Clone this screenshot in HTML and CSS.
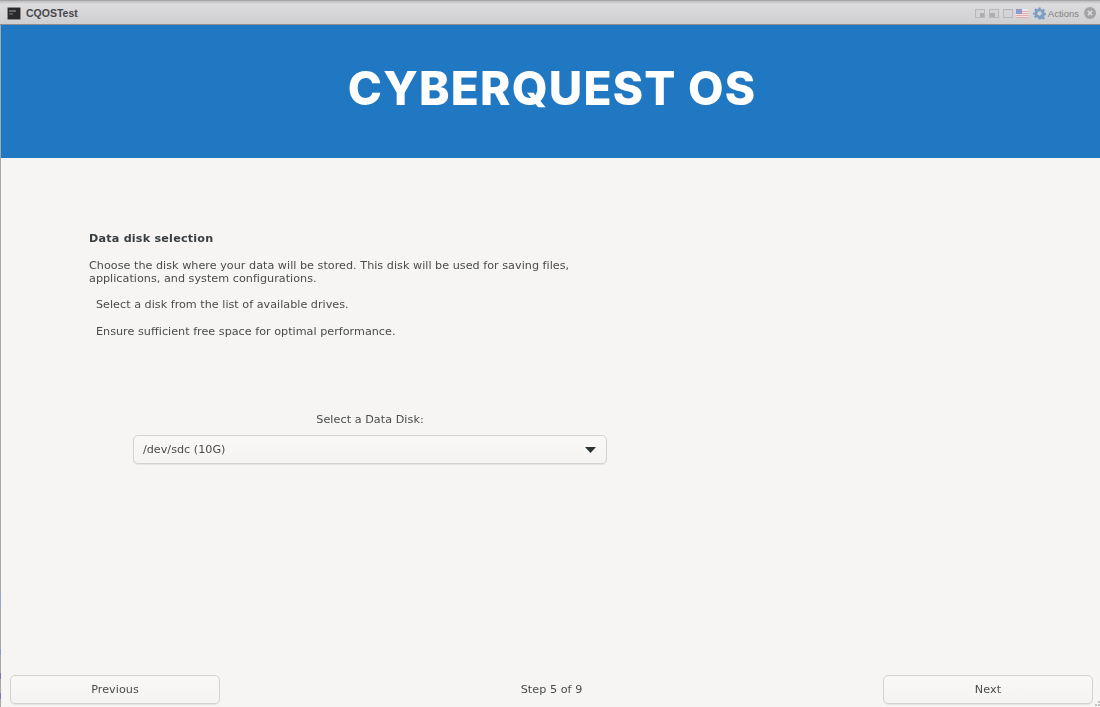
FILE: index.html
```html
<!DOCTYPE html>
<html lang="en">
<head>
<meta charset="utf-8">
<title>CQOSTest</title>
<link rel="stylesheet" href="styles.css">
</head>
<body>
<div class="window">
  <header class="titlebar">
    <div class="tb-left">
      <svg class="app-icon" width="14" height="13" viewBox="0 0 14 13"><rect x="0.5" y="0.5" width="13" height="12" rx="1" fill="#2a2a2c" stroke="#8a8a8c"/><rect x="2" y="3" width="7" height="2" fill="#666"/><rect x="2" y="6" width="4" height="2" fill="#555"/></svg>
      <span class="tb-title">CQOSTest</span>
    </div>
    <div class="tb-right">
      <svg width="10" height="9" viewBox="0 0 10 9"><rect x="0.5" y="0.5" width="9" height="8" fill="#d4d4d6" stroke="#b8b8ba"/><rect x="5" y="4" width="4" height="4" fill="#aeaeb0"/></svg>
      <svg width="10" height="9" viewBox="0 0 10 9"><rect x="0.5" y="0.5" width="9" height="8" fill="#d4d4d6" stroke="#b8b8ba"/><rect x="1" y="4" width="5" height="4" fill="#aeaeb0"/></svg>
      <svg width="10" height="9" viewBox="0 0 10 9"><rect x="0.5" y="0.5" width="9" height="8" fill="#d4d4d6" stroke="#b8b8ba"/></svg>
      <svg class="flag" width="12" height="9" viewBox="0 0 12 9"><rect width="12" height="9" fill="#ece6e8"/><rect y="2" width="12" height="1" fill="#e6a8a8"/><rect y="4" width="12" height="1" fill="#e6a8a8"/><rect y="6" width="12" height="1" fill="#e6a8a8"/><rect y="8" width="12" height="1" fill="#e6a8a8"/><rect width="6" height="5" fill="#8f9acb"/></svg>
      <svg class="gear" width="13" height="13" viewBox="0 0 24 24"><path fill="#7f9dc2" d="M10 1h4l.6 3.2 2 .8 2.7-1.8 2.8 2.8-1.8 2.7.8 2 3.2.6v4l-3.2.6-.8 2 1.8 2.7-2.8 2.8-2.7-1.8-2 .8L14 23h-4l-.6-3.2-2-.8-2.7 1.8-2.8-2.8 1.8-2.7-.8-2L0 14.6v-4l3.2-.6.8-2L2.2 5.3 5 2.5l2.7 1.8 2-.8zM12 8a4 4 0 1 0 0 8 4 4 0 0 0 0-8z"/></svg>
      <span class="tb-actions">Actions</span>
      <svg class="close" width="12" height="12" viewBox="0 0 12 12"><circle cx="6" cy="6" r="6" fill="#a3a3a5"/><path d="M3.8 3.8l4.4 4.4M8.2 3.8L3.8 8.2" stroke="#dedee0" stroke-width="1.5"/></svg>
    </div>
  </header>
  <div class="banner"><h1 class="brand">CYBERQUEST OS</h1></div>
  <main class="content">
    <section class="intro">
      <h2 class="intro-title">Data disk selection</h2>
      <p class="intro-text">Choose the disk where your data will be stored. This disk will be used for saving files, applications, and system configurations.</p>
      <p class="intro-item">Select a disk from the list of available drives.</p>
      <p class="intro-item">Ensure sufficient free space for optimal performance.</p>
    </section>
    <section class="picker">
      <div class="picker-label">Select a Data Disk:</div>
      <div class="select">
        <span>/dev/sdc (10G)</span>
        <svg width="11" height="6" viewBox="0 0 11 6"><path d="M0 0h11L5.5 6z" fill="#2e3436"/></svg>
      </div>
    </section>
  </main>
  <footer class="footer">
    <button class="btn">Previous</button>
    <span class="step">Step 5 of 9</span>
    <button class="btn">Next</button>
  </footer>
  <svg class="grip" width="7" height="7" viewBox="0 0 7 7"><rect x="5" y="1" width="2" height="2" fill="#c4c2c0"/><rect x="2" y="4" width="2" height="2" fill="#c4c2c0"/><rect x="5" y="4" width="2" height="2" fill="#c4c2c0"/></svg>
</div>
</body>
</html>
```
FILE: styles.css
```css
* { box-sizing: border-box; }
html, body { margin: 0; height: 100%; }
body { font-family: "DejaVu Sans", sans-serif; font-size: 11.2px; color: #494b4c; background: #f6f5f4; overflow: hidden; }
.window { position: relative; width: 1100px; height: 707px; display: flex; flex-direction: column; border-left: 1px solid #a8a8aa; border-image: linear-gradient(to bottom, #a8a8aa 0 592px, #8ea9cc 592px 606px, #a8a8aa 606px 648px, #8d9ac6 648px 654px, #a8a8aa 654px 672px, #7d78b4 672px 678px, #a8a8aa 678px 692px, #7d78b4 692px 698px, #a8a8aa 698px) 1; filter: blur(0.3px); }
.titlebar { height: 25px; margin-left: -1px; flex: none; display: flex; justify-content: space-between; align-items: center; padding: 1px 4px 0 7px; background: linear-gradient(#bdbdc0 0, #dcdcde 3px, #cfcfd1 100%); border-top: 1px solid #a5a5a8; border-bottom: 1px solid #8f8f91; }
.tb-left { display: flex; align-items: center; gap: 5px; }
.tb-title { font-family: "Liberation Sans", sans-serif; font-weight: 700; font-size: 10.5px; color: #47474b; }
.tb-right { display: flex; align-items: center; gap: 4px; }
.flag { margin-left: -1px; }
.gear { margin-left: 1px; }
.tb-actions { font-family: "Liberation Sans", sans-serif; font-size: 9.5px; color: #808084; margin-left: -2px; margin-right: 1px; }
.banner { height: 133px; flex: none; background: #2078c2; display: flex; align-items: center; justify-content: center; padding-left: 3px; }
.brand { margin: -7px 0 0; font-family: Inter, sans-serif; font-weight: 800; font-size: 46px; color: #fff; letter-spacing: 1.2px; line-height: 1; }
.content { flex: 1; padding: 74px 0 0 88px; }
.intro { width: 500px; }
.intro-title { margin: 0 0 14px; font-size: 11.2px; font-weight: 700; line-height: 13px; letter-spacing: 0.2px; color: #3a3e40; }
.intro-text { margin: 0 0 13px; line-height: 13px; letter-spacing: 0.02px; }
.intro-item { margin: 0 0 14px 7px; line-height: 13px; letter-spacing: 0.01px; }
.picker { width: 474px; margin: 75px 0 0 44px; }
.picker-label { text-align: center; line-height: 13px; letter-spacing: 0.05px; margin-bottom: 9px; }
.select { height: 29px; display: flex; align-items: center; justify-content: space-between; padding: 0 10px 0 9px; background: linear-gradient(#f9f8f7, #f5f4f3); border: 1px solid #d6d1cd; border-radius: 5px; box-shadow: 0 1px 0 #e6e3e0; }
.footer { height: 31px; flex: none; margin-bottom: 2px; margin-top: auto; display: flex; align-items: center; justify-content: space-between; padding: 0 7px 0 9px; }
.btn { width: 210px; height: 29px; font: inherit; color: #494b4c; background: linear-gradient(#f9f8f7, #f5f4f3); border: 1px solid #d6d1cd; border-radius: 5px; box-shadow: 0 1px 0 #e6e3e0; letter-spacing: 0.05px; }
.step { letter-spacing: 0.05px; }
.grip { position: absolute; right: 0; bottom: 0; }
```
